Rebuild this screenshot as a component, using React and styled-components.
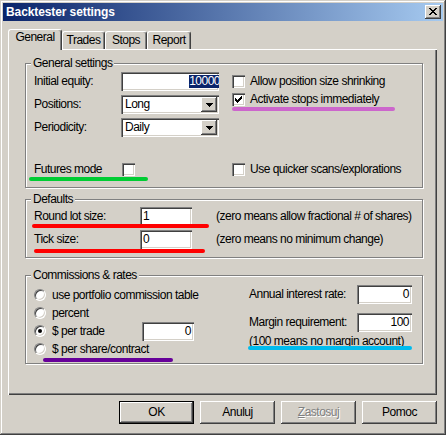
import React from "react";
import styled, { createGlobalStyle, css } from "styled-components";

const GlobalStyle = createGlobalStyle`
  html, body { margin: 0; padding: 0; background: #d4d0c8; }
  body {
    font-family: "Liberation Sans", Arial, sans-serif;
    font-size: 12px;
    letter-spacing: -0.5px;
    color: #000;
  }
  *, *::before, *::after { box-sizing: border-box; }
`;

const raised = css`
  box-shadow: inset -1px -1px #404040, inset 1px 1px #fff, inset -2px -2px #808080, inset 2px 2px #d4d0c8;
`;
const sunken = css`
  box-shadow: inset 1px 1px #808080, inset 2px 2px #404040, inset -1px -1px #fff, inset -2px -2px #d4d0c8;
`;

const Window = styled.div`
  width: 446px;
  height: 435px;
  padding: 3px;
  background: #d4d0c8;
  display: flex;
  flex-direction: column;
  box-shadow: inset -1px -1px #404040, inset 1px 1px #d4d0c8, inset -2px -2px #808080, inset 2px 2px #fff;
`;

const TitleBar = styled.div`
  height: 18px;
  flex: none;
  display: flex;
  align-items: center;
  justify-content: space-between;
  padding: 0 2px 0 3px;
  background: linear-gradient(90deg, #0a246a 0%, #a6caf0 100%);
`;

const TitleText = styled.span`
  color: #fff;
  font-weight: bold;
  font-size: 12px;
  letter-spacing: -0.1px;
  line-height: 14px;
`;

const CaptionButton = styled.div`
  width: 16px;
  height: 14px;
  background: #d4d0c8;
  ${raised};
  display: flex;
  align-items: center;
  justify-content: center;
  padding: 0 1px 1px 0;
`;

const PixelSvg = styled.svg`
  display: block;
  flex: none;
`;

const Pixels = ({ rows, color = "#000" }) => (
  <PixelSvg width={rows[0].length} height={rows.length} shapeRendering="crispEdges">
    {rows.flatMap((r, y) =>
      [...r].map((c, x) =>
        c === "x" ? <rect key={`${x}-${y}`} x={x} y={y} width={1} height={1} fill={color} /> : null
      )
    )}
  </PixelSvg>
);

const CLOSE = ["xx....xx", ".xx..xx.", "..xxxx..", "...xx...", "..xxxx..", ".xx..xx.", "xx....xx"];
const CHECK = ["......x", ".....xx", "x...xxx", "xx.xxx.", "xxxxx..", ".xxx...", "..x...."];
const ARROW = ["xxxxxxx", ".xxxxx.", "..xxx..", "...x..."];

const Body = styled.div`
  flex: 1;
  display: flex;
  flex-direction: column;
  padding: 0 6px 0 5px;
`;

const TabRow = styled.div`
  margin-top: 8px;
  height: 20px;
  display: flex;
  align-items: flex-end;
`;

const Tab = styled.div`
  position: relative;
  z-index: ${(p) => (p.$active ? 1 : 0)};
  width: ${(p) => p.$w}px;
  height: ${(p) => (p.$active ? 21 : 18)}px;
  margin-bottom: ${(p) => (p.$active ? -1 : 0)}px;
  background: #d4d0c8;
  border-top: 1px solid #fff;
  border-left: 1px solid #fff;
  border-right: 1px solid #404040;
  border-radius: 3px 3px 0 0;
  box-shadow: inset -1px 0 #808080;
  display: flex;
  justify-content: center;
  padding-top: ${(p) => (p.$active ? 1 : 2)}px;
  line-height: 13px;
`;

const Panel = styled.div`
  height: 346px;
  flex: none;
  background: #d4d0c8;
  box-shadow: inset 1px 1px #fff, inset -1px -1px #404040, inset -2px -2px #808080;
  padding: 8px 14px 0 17px;
  display: flex;
  flex-direction: column;
`;

const Group = styled.fieldset`
  margin: ${(p) => p.$mt || 0}px 0 0;
  padding: 0;
  min-width: 0;
  border: 1px solid #808080;
  box-shadow: inset 1px 1px #fff, 1px 1px #fff;
`;

const Legend = styled.legend`
  margin-left: 5px;
  padding: 0 2px;
  line-height: 13px;
  background: #d4d0c8;
`;

const G1Grid = styled.div`
  display: grid;
  grid-template-columns: 185px 1fr;
  column-gap: 13px;
  row-gap: 26px;
  padding: 2px 0 11px 8px;
`;

const Stack = styled.div`
  display: flex;
  flex-direction: column;
  gap: ${(p) => p.$gap || 0}px;
  padding-top: ${(p) => p.$pt || 0}px;
`;

const FieldRow = styled.div`
  position: relative;
  display: flex;
  align-items: center;
  height: ${(p) => p.$h || 19}px;
  margin-top: ${(p) => p.$mt || 0}px;
  line-height: 13px;
`;

const Label = styled.span`
  width: ${(p) => p.$w}px;
  flex: none;
  white-space: nowrap;
`;

const Edit = styled.div`
  width: ${(p) => p.$w}px;
  height: 19px;
  flex: none;
  background: #fff;
  ${sunken};
  display: flex;
  align-items: center;
  justify-content: ${(p) => (p.$right ? "flex-end" : "flex-start")};
  padding: 0 ${(p) => (p.$right ? p.$pr ?? 3 : 2)}px 0 ${(p) => (p.$right ? 2 : 3)}px;
  overflow: hidden;
  line-height: 13px;
  white-space: nowrap;
`;

const Selected = styled.span`
  background: #0a246a;
  color: #fff;
  margin-right: -1px;
`;

const Select = styled.div`
  width: 98px;
  height: 19px;
  flex: none;
  background: #fff;
  ${sunken};
  display: flex;
  align-items: center;
  padding: 2px;
`;

const SelectText = styled.span`
  flex: 1;
  padding-left: 2px;
  line-height: 13px;
`;

const DropButton = styled.div`
  width: 16px;
  height: 15px;
  background: #d4d0c8;
  ${raised};
  display: flex;
  align-items: center;
  justify-content: center;
  padding-left: 1px;
`;

const CheckRow = styled.div`
  position: relative;
  display: flex;
  align-items: center;
  gap: 5px;
  height: 13px;
  line-height: 13px;
  white-space: nowrap;
`;

const CheckBox = styled.span`
  width: 13px;
  height: 13px;
  flex: none;
  background: #fff;
  ${sunken};
  display: flex;
  align-items: center;
  justify-content: center;
`;

const Note = styled.span`
  position: relative;
  margin-left: ${(p) => p.$ml || 0}px;
  margin-top: ${(p) => p.$mt || 0}px;
  line-height: 13px;
  white-space: nowrap;
`;

const G2Body = styled.div`
  display: flex;
  flex-direction: column;
  gap: 4px;
  padding: 1px 0 8px 8px;
`;

const G3Grid = styled.div`
  display: grid;
  grid-template-columns: 215px 1fr;
  padding: 0 0 5px 8px;
`;

const RadioRow = styled.div`
  position: relative;
  display: flex;
  align-items: center;
  gap: 6px;
  height: 18px;
  line-height: 13px;
  white-space: nowrap;
`;

const RadioCircle = styled.span`
  width: 12px;
  height: 12px;
  flex: none;
  border-radius: 50%;
  background: #fff;
  border: 1px solid;
  border-color: #808080 #fff #fff #808080;
  box-shadow: inset 1px 1px #404040, inset -1px -1px #d4d0c8;
  display: flex;
  align-items: center;
  justify-content: center;
  &::after {
    content: "";
    width: 4px;
    height: 4px;
    border-radius: 50%;
    background: #000;
    display: ${(p) => (p.$checked ? "block" : "none")};
  }
`;

const RadioText = styled.span`
  width: ${(p) => (p.$w ? `${p.$w}px` : "auto")};
  flex: none;
`;

const Stroke = styled.span`
  position: absolute;
  z-index: 2;
  left: ${(p) => p.$left}px;
  top: ${(p) => p.$top}px;
  width: ${(p) => p.$width}px;
  height: 4px;
  border-radius: 2px;
  background: ${(p) => p.$color};
  pointer-events: none;
`;

const ButtonRow = styled.div`
  margin-top: 6px;
  display: flex;
  justify-content: flex-end;
  gap: 6px;
`;

const Button = styled.div`
  width: 75px;
  height: 23px;
  background: #d4d0c8;
  display: flex;
  align-items: center;
  justify-content: center;
  line-height: 13px;
  color: ${(p) => (p.$disabled ? "#808080" : "#000")};
  text-shadow: ${(p) => (p.$disabled ? "1px 1px #fff" : "none")};
  ${(p) =>
    p.$default
      ? css`
          box-shadow: inset 0 0 0 1px #000, inset -2px -2px #404040, inset 2px 2px #fff, inset -3px -3px #808080,
            inset 3px 3px #d4d0c8;
        `
      : raised};
`;

const Mnemonic = styled.span`
  text-decoration: underline;
`;

const Radio = ({ checked, children, w }) => (
  <>
    <RadioCircle $checked={checked} />
    <RadioText $w={w}>{children}</RadioText>
  </>
);

const Check = ({ checked }) => <CheckBox>{checked && <Pixels rows={CHECK} />}</CheckBox>;

export default function App() {
  return (
    <>
      <GlobalStyle />
      <Window>
        <TitleBar>
          <TitleText>Backtester settings</TitleText>
          <CaptionButton>
            <Pixels rows={CLOSE} />
          </CaptionButton>
        </TitleBar>
        <Body>
          <TabRow>
            <Tab $active $w={54}>General</Tab>
            <Tab $w={43}>Trades</Tab>
            <Tab $w={42}>Stops</Tab>
            <Tab $w={44}>Report</Tab>
          </TabRow>
          <Panel>
            <Group>
              <Legend>General settings</Legend>
              <G1Grid>
                <Stack $gap={4}>
                  <FieldRow>
                    <Label $w={87}>Initial equity:</Label>
                    <Edit $w={98} $right $pr={0}>
                      <Selected>10000</Selected>
                    </Edit>
                  </FieldRow>
                  <FieldRow>
                    <Label $w={87}>Positions:</Label>
                    <Select>
                      <SelectText>Long</SelectText>
                      <DropButton>
                        <Pixels rows={ARROW} />
                      </DropButton>
                    </Select>
                  </FieldRow>
                  <FieldRow>
                    <Label $w={87}>Periodicity:</Label>
                    <Select>
                      <SelectText>Daily</SelectText>
                      <DropButton>
                        <Pixels rows={ARROW} />
                      </DropButton>
                    </Select>
                  </FieldRow>
                </Stack>
                <Stack $gap={5} $pt={3}>
                  <CheckRow>
                    <Check />
                    Allow position size shrinking
                  </CheckRow>
                  <CheckRow>
                    <Check checked />
                    Activate stops immediately
                    <Stroke $left={0} $top={14} $width={163} $color="#cc66cc" />
                  </CheckRow>
                </Stack>
                <CheckRow>
                  <Label $w={83}>Futures mode</Label>
                  <Check />
                  <Stroke $left={-5} $top={14} $width={119} $color="#00cc33" />
                </CheckRow>
                <CheckRow>
                  <Check />
                  Use quicker scans/explorations
                </CheckRow>
              </G1Grid>
            </Group>

            <Group $mt={5}>
              <Legend>Defaults</Legend>
              <G2Body>
                <FieldRow>
                  <Label $w={106}>Round lot size:</Label>
                  <Edit $w={52}>1</Edit>
                  <Note $ml={24}>(zero means allow fractional # of shares)</Note>
                  <Stroke $left={-2} $top={17} $width={177} $color="#ff0000" />
                </FieldRow>
                <FieldRow>
                  <Label $w={106}>Tick size:</Label>
                  <Edit $w={52}>0</Edit>
                  <Note $ml={24}>(zero means no minimum change)</Note>
                  <Stroke $left={0} $top={19} $width={171} $color="#ff0000" />
                </FieldRow>
              </G2Body>
            </Group>

            <Group $mt={11}>
              <Legend>Commissions &amp; rates</Legend>
              <G3Grid>
                <Stack $pt={4}>
                  <RadioRow>
                    <Radio>use portfolio commission table</Radio>
                  </RadioRow>
                  <RadioRow>
                    <Radio>percent</Radio>
                  </RadioRow>
                  <RadioRow>
                    <Radio checked w={84}>
                      $ per trade
                    </Radio>
                    <Edit $w={52} $right>
                      0
                    </Edit>
                  </RadioRow>
                  <RadioRow>
                    <Radio>$ per share/contract</Radio>
                    <Stroke $left={9} $top={18} $width={130} $color="#660099" />
                  </RadioRow>
                </Stack>
                <Stack $pt={3}>
                  <FieldRow>
                    <Label $w={108}>Annual interest rate:</Label>
                    <Edit $w={55} $right>
                      0
                    </Edit>
                  </FieldRow>
                  <FieldRow $mt={9}>
                    <Label $w={108}>Margin requirement:</Label>
                    <Edit $w={55} $right>
                      100
                    </Edit>
                  </FieldRow>
                  <Note $mt={3}>
                    (100 means no margin account)
                    <Stroke $left={-1} $top={11} $width={164} $color="#00bbee" />
                  </Note>
                </Stack>
              </G3Grid>
            </Group>
          </Panel>
          <ButtonRow>
            <Button $default>OK</Button>
            <Button>Anuluj</Button>
            <Button $disabled>
              <span>
                <Mnemonic>Z</Mnemonic>astosuj
              </span>
            </Button>
            <Button>Pomoc</Button>
          </ButtonRow>
        </Body>
      </Window>
    </>
  );
}
